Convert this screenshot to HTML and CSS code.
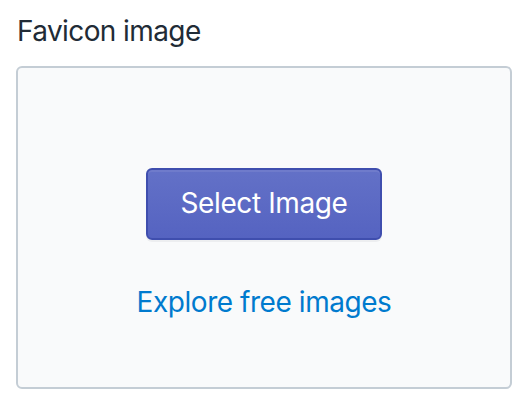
FILE: index.html
```html
<!DOCTYPE html>
<html lang="en">
<head>
<meta charset="utf-8">
<title>Favicon image</title>
<link rel="stylesheet" href="styles.css">
</head>
<body>
  <div class="field">
    <div class="label">Favicon image</div>
    <div class="dropzone">
      <button class="btn-primary" type="button">Select Image</button>
      <a class="link" href="#">Explore free images</a>
    </div>
  </div>
</body>
</html>
```

FILE: styles.css
```css
html, body {
  margin: 0;
  padding: 0;
  background: #ffffff;
}

body {
  font-family: Inter, "Noto Sans", "Liberation Sans", sans-serif;
  color: #212b36;
  letter-spacing: -0.45px;
}

.field {
  padding: 11px 18px 0 16px;
}

.label {
  font-size: 28px;
  line-height: 40px;
  padding-left: 1px;
  margin-bottom: 15px;
  letter-spacing: -0.6px;
}

.dropzone {
  box-sizing: border-box;
  height: 323px;
  border: 2px solid #c4cdd5;
  border-radius: 6px;
  background: #f9fafb;
  display: flex;
  flex-direction: column;
  align-items: center;
  padding-top: 100px;
}

.btn-primary {
  box-sizing: border-box;
  width: 236px;
  height: 72px;
  padding: 0 0 2px;
  border: 2px solid #3f4eae;
  border-radius: 6px;
  background: linear-gradient(to bottom, #6371c7, #5563c1);
  box-shadow: inset 0 2px 0 0 #6f7bcb, 0 2px 0 0 rgba(22, 29, 37, 0.05);
  color: #ffffff;
  font-family: inherit;
  font-size: 28px;
  line-height: 66px;
  letter-spacing: -0.4px;
  cursor: pointer;
}

.link {
  margin-top: 42px;
  font-size: 28px;
  line-height: 40px;
  color: #007ace;
  text-decoration: none;
}
```
